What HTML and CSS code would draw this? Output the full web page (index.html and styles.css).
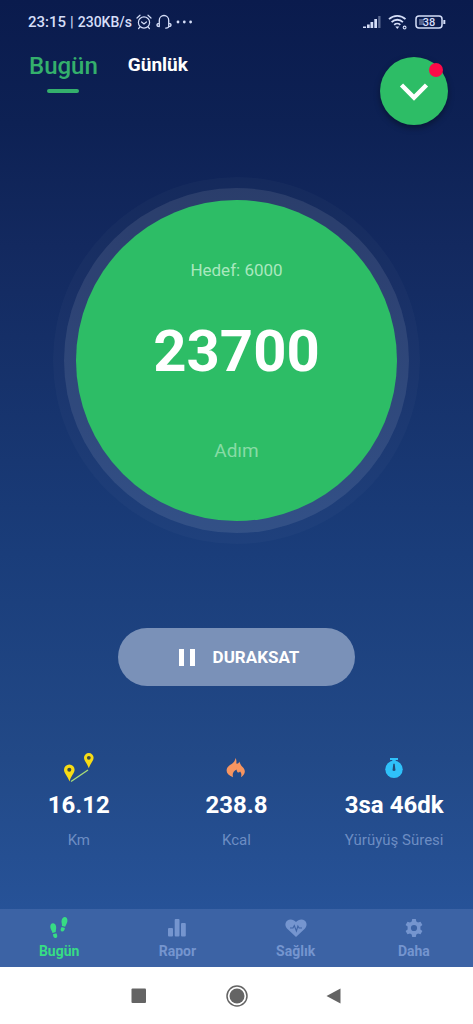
FILE: index.html
```html
<!DOCTYPE html>
<html lang="tr">
<head>
<meta charset="utf-8">
<meta name="viewport" content="width=device-width, initial-scale=1">
<title>Adım Sayar</title>
<link rel="stylesheet" href="styles.css">
</head>
<body>
<div class="app">
  <div class="status">
    <div class="status-left">
      <span>23:15</span><span class="status-sep">|</span><span class="rate">230KB/s</span>
      <svg width="16" height="16" viewBox="0 0 16 16" fill="none" stroke="currentColor" stroke-width="1.2" stroke-linecap="round"><circle cx="8" cy="8.5" r="5.6"/><path d="M5.600 8l2.400 2 2.400-2M1 4l3-2.800M15 4l-3-2.800M3.800 13.200l-1.200 1.300M12.200 13.200l1.200 1.300"/></svg>
      <svg width="16" height="16" viewBox="0 0 16 16" fill="none" stroke="currentColor" stroke-width="1.3" stroke-linecap="round"><path d="M3.300 12.600V6.200a4.700 4.700 0 0 1 9.400 0V12.600M3.300 9.400C1.800 9.400 1 10 1 11s.8 1.600 2.300 1.600M12.700 9.400c1.500 0 2.300.6 2.300 1.600s-.8 1.600-2.300 1.600c0 1-1 1.500-3 1.500"/></svg>
      <svg width="17" height="16" viewBox="0 0 17 16" fill="currentColor"><circle cx="2" cy="8" r="1.400"/><circle cx="8.300" cy="8" r="1.400"/><circle cx="14.600" cy="8" r="1.400"/></svg>
    </div>
    <div class="status-right">
      <svg width="18" height="14" viewBox="0 0 18 14" fill="currentColor"><path d="M0 11.500h3V13H0zM4 9.500h2.700V13H4zM7.500 7h2.700v6H7.500zM11.300 4h2.700v9h-2.700z"/><path opacity=".4" d="M15.200 1h2.300v12h-2.300z"/></svg>
      <svg width="20" height="16" viewBox="0 0 20 16" fill="none" stroke="currentColor" stroke-width="1.800"><path d="M1 5.200a12 12 0 0 1 16.500 0M3.600 8.100a8 8 0 0 1 11.300 0M6.200 10.800a4.500 4.500 0 0 1 6.100 0"/><path fill="currentColor" stroke="none" d="M7.300 12.500h4L9.300 15z"/><circle cx="16.600" cy="13.500" r="1.400" stroke-width="1.100"/></svg>
      <svg width="31" height="14" viewBox="0 0 31 14" fill="none" stroke="currentColor" stroke-width="1.500"><rect x="1" y="1" width="26" height="12" rx="3"/><path d="M29.300 5v4" stroke-width="2"/><path d="M4 4h5v6H4z" fill="currentColor" stroke="none" opacity=".35"/><text class="battery-text" x="14" y="11">38</text></svg>
    </div>
  </div>

  <header class="header">
    <nav class="tabs">
      <button class="tab tab-active">Bugün</button>
      <button class="tab">Günlük</button>
    </nav>
    <button class="more" aria-label="Aç">
      <svg width="30" height="20" viewBox="0 0 30 20" fill="none" stroke="#fff" stroke-width="4.500"><path d="M2.500 4L15 16.500 27.500 4"/></svg>
      <span class="badge"></span>
    </button>
  </header>

  <main class="main">
    <section class="dial">
      <p class="goal">Hedef: 6000</p>
      <p class="count">23700</p>
      <p class="unit">Adım</p>
    </section>

    <button class="pause">
      <svg width="18" height="17" viewBox="0 0 18 17" fill="#fff"><path d="M1 0h5v17H1zM12 0h5v17h-5z"/></svg>
      <span>DURAKSAT</span>
    </button>

    <section class="stats">
      <div class="stat">
        <svg width="32" height="32" viewBox="0 0 32 32"><path d="M8 29.500L25 18" stroke="#a9dc78" stroke-width="1.400"/><path fill="#f8dc15" d="M6.300 12.500a5.300 5.300 0 0 0-5.300 5.300c0 3.500 3.500 6 5.500 11.700 1.500-5.500 5.100-8.200 5.100-11.700a5.300 5.300 0 0 0-5.300-5.300zM25.800 1a4.800 4.800 0 0 0-4.800 4.800c0 3.200 3.200 5.500 4.800 10.500 1.600-5 4.800-7.300 4.800-10.500A4.800 4.800 0 0 0 25.800 1z"/><g fill="#3e4c43"><circle cx="6.300" cy="17.700" r="2"/><circle cx="25.800" cy="5.800" r="1.900"/></g></svg>
        <p class="value">16.12</p>
        <p class="label">Km</p>
      </div>
      <div class="stat">
        <svg width="32" height="32" viewBox="0 0 32 32"><path fill="#f79560" d="M15.500 6c1.200 2.200 1 3.500.8 5.600 1.500.3 2.600-.4 3-2 1 2.500 1.800 4.200 3.800 6 3 3.200 2 7.400-2.200 9.600 1-3 .3-4.300-.8-5.700-.7 1-1.600 1.400-2.600.8-.8-1-1-1.900-.8-2.900-3.300 1.200-4.600 4.300-3.700 7.800C6 22.500 5 17.600 8.800 14.100c2.400-2.300 6.300-3.500 6.700-8.100z"/></svg>
        <p class="value">238.8</p>
        <p class="label">Kcal</p>
      </div>
      <div class="stat">
        <svg width="32" height="32" viewBox="0 0 32 32"><path fill="#2fc1fa" d="M12 6h8v2h-2.300v1.500h-3.400V8H12z"/><circle cx="16" cy="17.300" r="8.700" fill="#2fc1fa"/><path fill="#234b78" d="M15.300 11.800h1.400l.6 5.300a1.400 1.400 0 1 1-2.600 0z"/></svg>
        <p class="value">3sa 46dk</p>
        <p class="label">Yürüyüş Süresi</p>
      </div>
    </section>
  </main>

  <nav class="bottom">
    <button class="item item-active">
      <svg width="24" height="24" viewBox="0 0 24 24" fill="currentColor"><path d="M6.300 7.300c2 .3 3 2.300 2.900 4.500 0 1.700-.6 2.700-.4 4.300l-3.300 1c-.3-2-2-3.300-2.200-6-.1-2.400 1-4 3-3.800z"/><path d="M5.900 18.200l3.400-1c1.200 1.900 1.500 4.300-.3 4.800-2 .5-2.800-1.500-3.100-3.800z"/><path d="M17.500 1c2.100-.1 3.200 1.700 2.900 4.200-.3 2.300-1.700 3.600-2.200 5.600l-3.300-.9c.3-1.700-.4-2.500-.4-4.300.1-2.500 1.200-4.500 3-4.600z"/><path d="M14.600 11l3.300.9c-.3 2.400-1.400 4-3.200 3.500-1.700-.5-1.300-2.500-.1-4.400z"/></svg>
      <span>Bugün</span>
    </button>
    <button class="item">
      <svg width="24" height="24" viewBox="0 0 24 24" fill="currentColor"><rect x="3" y="12" width="5" height="8.500" rx="1"/><rect x="9.700" y="3" width="4.800" height="17.500" rx="1"/><rect x="16" y="7" width="4.800" height="13.500" rx="1"/></svg>
      <span>Rapor</span>
    </button>
    <button class="item">
      <svg width="24" height="24" viewBox="0 0 24 24"><path fill="currentColor" d="M12 21L3.500 13C.7 10.300.9 6.700 3.100 4.800 5.800 2.600 9.600 3.300 12 6c2.400-2.700 6.200-3.400 8.900-1.200 2.200 1.900 2.400 5.500-.4 8.200z"/><path fill="none" stroke="#3f65a6" stroke-width="1.100" d="M6 12h3l1.300-2.500 2.100 5.500 1.500-5 1.200 2H18"/></svg>
      <span>Sağlık</span>
    </button>
    <button class="item">
      <svg width="24" height="24" viewBox="0 0 24 24" fill="currentColor"><path fill-rule="evenodd" d="M10.200 3h3.600l.5 2.600 1.700 1 2.500-.9 1.900 3.200-2 1.700v2.800l2 1.700-1.900 3.200-2.500-.9-1.700 1-.5 2.600h-3.600l-.5-2.600-1.700-1-2.500.9-1.900-3.200 2-1.700v-2.800l-2-1.700 1.900-3.200 2.500.9 1.700-1zM12 8.900a3.100 3.100 0 1 0 0 6.200 3.100 3.100 0 0 0 0-6.200z"/></svg>
      <span>Daha</span>
    </button>
  </nav>

  <div class="system">
    <button class="sys" aria-label="Son uygulamalar"><svg width="24" height="24" viewBox="0 0 24 24" fill="currentColor"><rect x="4.500" y="4.500" width="14.500" height="14.500" rx="1"/></svg></button>
    <button class="sys" aria-label="Ana ekran"><svg width="24" height="24" viewBox="0 0 24 24"><circle cx="12" cy="12" r="10" fill="none" stroke="currentColor" stroke-width="1.500"/><circle cx="12" cy="12" r="7.500" fill="currentColor"/></svg></button>
    <button class="sys" aria-label="Geri"><svg width="24" height="24" viewBox="0 0 24 24" fill="currentColor"><path d="M3.500 12L17.500 4.500v15z"/></svg></button>
  </div>
</div>
</body>
</html>
```
FILE: styles.css
```css
* { box-sizing: border-box; }

body {
  margin: 0;
  font-family: Roboto, "Noto Sans", sans-serif;
  color: #fff;
}

p { margin: 0; }

svg { display: block; flex: none; }

button {
  border: 0;
  padding: 0;
  background: none;
  color: inherit;
  font-family: inherit;
  cursor: pointer;
}

.app {
  min-height: 100vh;
  display: flex;
  flex-direction: column;
  background: linear-gradient(#0a1b4d 0%, #0d2154 12%, #13295f 24%, #1a3d7a 54%, #224987 74%, #275399 90%);
}

.status {
  display: flex;
  justify-content: space-between;
  align-items: center;
  height: 44px;
  padding: 0 27px 0 28px;
  color: #d5def8;
  font-size: 15px;
  font-weight: 500;
}

.status-left,
.status-right {
  display: flex;
  align-items: center;
}

.status-left { gap: 4px; }
.status-right { gap: 7px; }
.status-sep { font-weight: 400; }
.rate { font-size: 14px; }

.battery-text {
  fill: currentColor;
  stroke: none;
  font-size: 11px;
  font-weight: 500;
  text-anchor: middle;
}

.header {
  display: flex;
  justify-content: space-between;
  align-items: flex-start;
  padding: 13px 25px 0 29px;
}

.tabs {
  display: flex;
  align-items: flex-start;
  gap: 30px;
}

.tab {
  height: 36px;
  display: flex;
  flex-direction: column;
  justify-content: space-between;
  align-items: center;
  font-size: 19px;
  font-weight: 700;
  line-height: 16px;
}

.tab-active {
  color: #34b06c;
  font-size: 24px;
  font-weight: 500;
  line-height: 18px;
}

.tab-active::after {
  content: "";
  width: 32px;
  height: 4px;
  border-radius: 2px;
  background: #34b06c;
}

.more {
  position: relative;
  width: 68px;
  height: 68px;
  display: grid;
  place-items: center;
  border-radius: 50%;
  background: #2dbd66;
  box-shadow: 0 3px 6px rgba(0, 0, 0, .35);
}

.badge {
  position: absolute;
  top: 6px;
  right: 5px;
  width: 14px;
  height: 14px;
  border-radius: 50%;
  background: #fb0a48;
}

.main {
  flex: 1;
  display: flex;
  flex-direction: column;
  align-items: center;
  padding-top: 75px;
}

.dial {
  width: 321px;
  height: 321px;
  display: flex;
  flex-direction: column;
  align-items: center;
  padding-top: 60px;
  border-radius: 50%;
  background: #2dbd66;
  box-shadow: 0 0 0 12px rgba(255, 255, 255, .09), 0 0 0 23px rgba(255, 255, 255, .025);
}

.goal {
  color: #a9e8be;
  font-size: 17px;
  line-height: 20px;
}

.count {
  margin-top: 36px;
  font-size: 58px;
  font-weight: 700;
  line-height: 70px;
}

.unit {
  margin-top: 54px;
  color: #87dba5;
  font-size: 19px;
  line-height: 22px;
}

.pause {
  width: 50%;
  height: 58px;
  display: flex;
  justify-content: center;
  align-items: center;
  gap: 17px;
  margin-top: 107px;
  padding-left: 4px;
  border-radius: 29px;
  background: #7a91b8;
  font-size: 17px;
  font-weight: 700;
}

.stats {
  width: 100%;
  display: grid;
  grid-template-columns: repeat(3, 1fr);
  margin-top: 66px;
}

.stat {
  display: flex;
  flex-direction: column;
  align-items: center;
}

.value {
  margin-top: 6px;
  font-size: 24px;
  font-weight: 700;
  line-height: 30px;
  white-space: nowrap;
}

.label {
  margin-top: 10px;
  color: #6d8dc3;
  font-size: 15px;
  line-height: 20px;
}

.bottom {
  display: grid;
  grid-template-columns: repeat(4, 1fr);
  height: 58px;
  background: #3c63a5;
}

.item {
  display: flex;
  flex-direction: column;
  align-items: center;
  gap: 3px;
  padding-top: 7px;
  color: #7595cf;
  font-size: 14px;
  font-weight: 700;
  line-height: 16px;
}

.item-active { color: #37dc84; }

.system {
  height: 57px;
  display: flex;
  justify-content: center;
  align-items: center;
  gap: 74px;
  background: #fff;
  color: #646464;
}
```
